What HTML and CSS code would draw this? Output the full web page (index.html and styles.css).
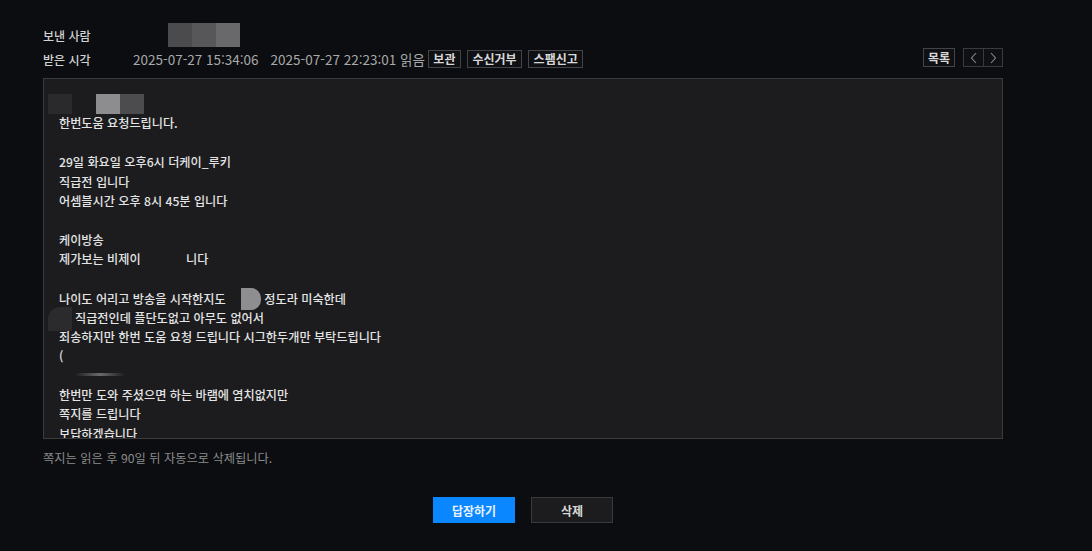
FILE: index.html
```html
<!DOCTYPE html>
<html lang="ko">
<head>
<meta charset="utf-8">
<link rel="stylesheet" href="styles.css">
</head>
<body>
<div class="page">
  <div class="meta">
    <div class="row row-from">
      <span class="label">보낸 사람</span>
      <span class="sender"><i class="px p1"></i><i class="px p2"></i><i class="px p3"></i></span>
    </div>
    <div class="row row-time">
      <span class="label">받은 시각</span>
      <span class="date">2025-07-27 15:34:06</span>
      <span class="date read">2025-07-27 22:23:01 읽음</span>
      <span class="tools">
        <button class="sbtn">보관</button>
        <button class="sbtn">수신거부</button>
        <button class="sbtn">스팸신고</button>
      </span>
      <span class="nav">
        <button class="sbtn list">목록</button>
        <span class="arrows">
          <button class="arrow" aria-label="이전"><svg width="8" height="12" viewBox="0 0 8 12"><path d="M6 1 L1.5 6 L6 11" fill="none" stroke="#8a8a8a" stroke-width="1.1"/></svg></button>
          <button class="arrow" aria-label="다음"><svg width="8" height="12" viewBox="0 0 8 12"><path d="M2 1 L6.5 6 L2 11" fill="none" stroke="#8a8a8a" stroke-width="1.1"/></svg></button>
        </span>
      </span>
    </div>
  </div>
  <div class="box">
    <div class="msg">
      <p class="line redline"><i class="r r1"></i><i class="r r2"></i><i class="r r3"></i></p>
      <p class="line">한번도움 요청드립니다.</p>
      <p class="line">&nbsp;</p>
      <p class="line">29일 화요일 오후6시 더케이_루키</p>
      <p class="line">직급전 입니다</p>
      <p class="line">어셈블시간 오후 8시 45분 입니다</p>
      <p class="line">&nbsp;</p>
      <p class="line">케이방송</p>
      <p class="line">제가보는 비제이 <span class="hole"></span>니다</p>
      <p class="line">&nbsp;</p>
      <p class="line">나이도 어리고 방송을 시작한지도 <span class="blob"></span> 정도라 미숙한데</p>
      <p class="line"><span class="smudge"></span>직급전인데 플단도없고 아무도 없어서</p>
      <p class="line">죄송하지만 한번 도움 요청 드립니다 시그한두개만 부탁드립니다</p>
      <p class="line">(</p>
      <p class="line"><span class="streak"></span></p>
      <p class="line">한번만 도와 주셨으면 하는 바램에 염치없지만</p>
      <p class="line">쪽지를 드립니다</p>
      <p class="line">보답하겠습니다</p>
    </div>
  </div>
  <p class="note">쪽지는 읽은 후 90일 뒤 자동으로 삭제됩니다.</p>
  <div class="actions">
    <button class="btn primary">답장하기</button>
    <button class="btn">삭제</button>
  </div>
</div>
</body>
</html>
```

FILE: styles.css
```css
* { box-sizing: border-box; }
html, body { margin: 0; padding: 0; }
body {
  background: #0b0d10;
  font-family: "Noto Sans CJK KR", "Noto Sans", sans-serif;
  font-size: 12px;
  color: #d6d6d6;
  width: 1092px;
  height: 551px;
  overflow: hidden;
}
.page {
  width: 960px;
  margin-left: 43px;
  padding-top: 23px;
}
.meta { display: flex; flex-direction: column; }
.row { display: flex; align-items: center; height: 24px; }
.label { width: 90px; color: #d2d2d2; font-weight: 500; }
.sender { display: flex; height: 24px; margin-left: 35px; }
.px { display: block; width: 24px; height: 24px; }
.p1 { background: #4b4b4d; }
.p2 { background: #575759; }
.p3 { background: #69696b; }
.date { color: #a9a9a9; font-size: 13.5px; margin-right: 12px; }
.read { margin-right: 3px; }
.tools { display: flex; gap: 6px; }
.sbtn {
  font-family: inherit;
  font-size: 12px;
  font-weight: 700;
  color: #d8d8d8;
  background: #0f1013;
  border: 1px solid #444448;
  height: 18px;
  padding: 0 4px;
  line-height: 16px;
  cursor: pointer;
}
.tools .sbtn { padding: 0 4.5px; }
.nav {
  margin-left: auto;
  display: flex;
  gap: 8px;
  align-self: flex-start;
  margin-top: 1px;
}
.list { height: 19px; padding: 0 4px; }
.arrows { display: flex; border: 1px solid #3a3a3e; height: 19px; }
.arrow {
  width: 19px;
  height: 17px;
  background: #0f1013;
  border: 0;
  padding: 0;
  display: flex;
  align-items: center;
  justify-content: center;
}
.arrow + .arrow { border-left: 1px solid #3a3a3e; }
.box {
  margin-top: 7px;
  height: 361px;
  background: #1c1c1f;
  border: 1px solid #3b3b3e;
  overflow: hidden;
}
.msg { padding: 15px 0 0 15px; }
.line {
  margin: 0;
  height: 19.4px;
  line-height: 19.4px;
  color: #e4e4e4;
  font-size: 12.15px;
  font-weight: 500;
  white-space: nowrap;
}
.redline { margin-left: -11px; display: flex; align-items: center; }
.r { display: block; height: 20px; width: 24px; }
.r1 { background: #2a2a2d; }
.r2 { background: #8d8d90; margin-left: 24px; }
.r3 { background: #4c4c4f; }
.hole { display: inline-block; width: 42px; }
.blob {
  display: inline-block;
  width: 20px;
  height: 22px;
  background: #8e8e91;
  border-radius: 0 10px 10px 0;
  vertical-align: -6px;
  margin-left: 12px;
}
.smudge {
  display: inline-block;
  width: 24px;
  height: 24px;
  margin-left: -11px;
  margin-right: 3px;
  background: #2b2b2e;
  border-radius: 12px 0 0 0;
  vertical-align: -8px;
}
.streak {
  display: inline-block;
  width: 50px;
  height: 3px;
  margin-left: 16px;
  background: linear-gradient(90deg, rgba(160,160,160,0), #6a6a6c, rgba(160,160,160,0));
  vertical-align: 4px;
}
.note {
  margin: 10px 0 0 0;
  color: #8c8c8c;
  font-size: 12.25px;
}
.actions {
  display: flex;
  justify-content: center;
  gap: 16px;
  margin-top: 30px;
}
.btn {
  width: 82px;
  height: 26px;
  font-family: inherit;
  font-size: 12px;
  font-weight: 700;
  color: #d8d8d8;
  background: #1c1c1f;
  border: 1px solid #3a3a3e;
}
.btn.primary {
  background: #0a87ff;
  border-color: #0a87ff;
  color: #e8f2ff;
}
```
